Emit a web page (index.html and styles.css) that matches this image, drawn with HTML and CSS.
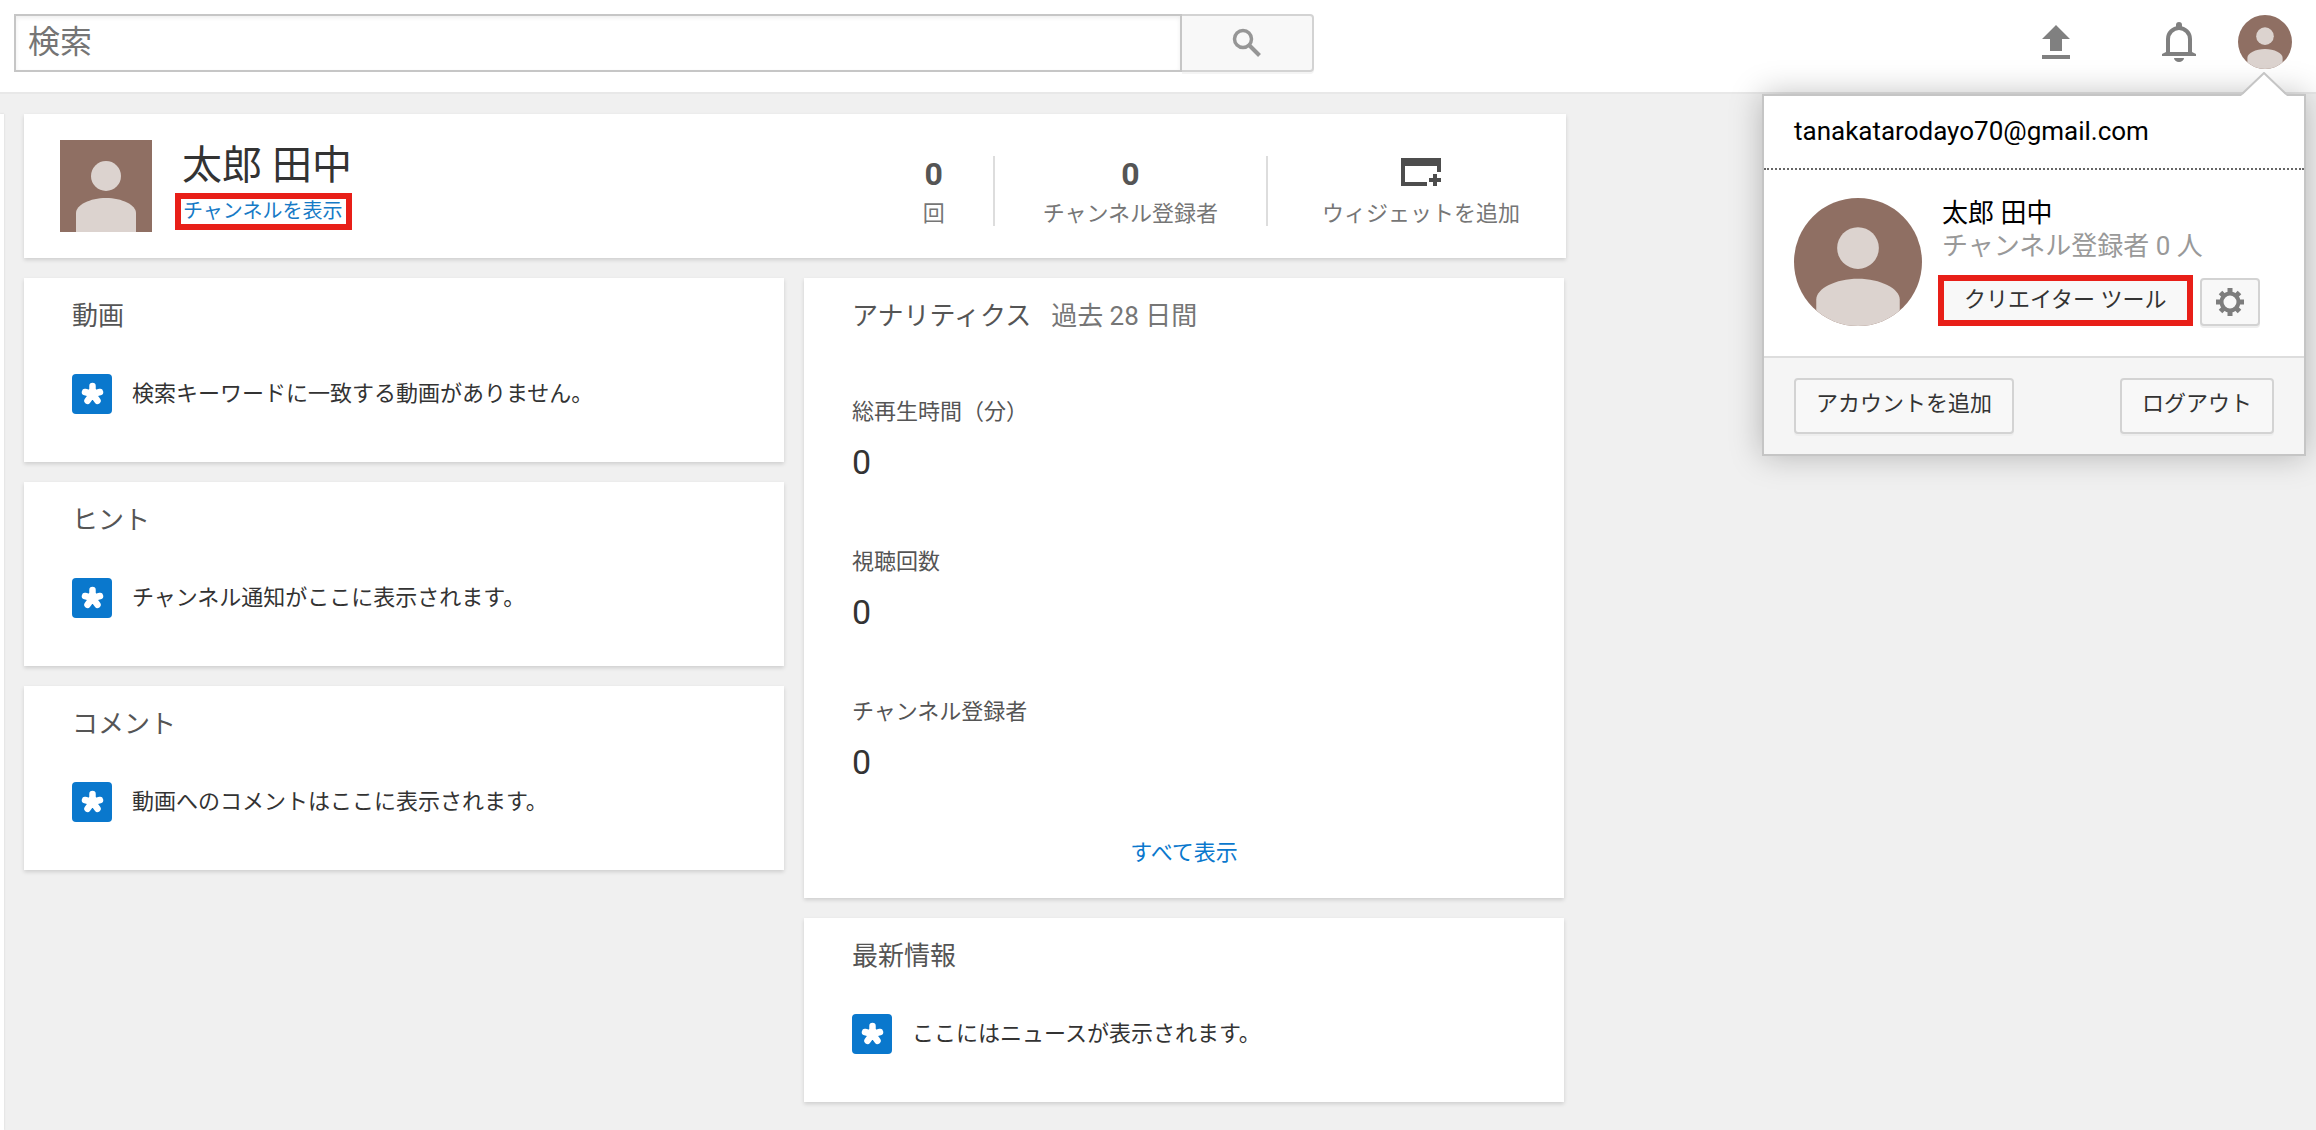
FILE: index.html
```html
<!DOCTYPE html>
<html lang="ja">
<head>
<meta charset="utf-8">
<title>ダッシュボード</title>
<link rel="stylesheet" href="styles.css">
</head>
<body>
<svg class="defs" aria-hidden="true">
  <symbol id="person" viewBox="0 0 92 92">
    <rect width="92" height="92" fill="#8f6f63"/>
    <circle cx="46" cy="36" r="15" fill="#dcd3cf"/>
    <path d="M16 92V73c0-8 14-15 30-15s30 7 30 15v19z" fill="#dcd3cf"/>
  </symbol>
  <symbol id="star" viewBox="0 0 40 40">
    <g stroke="#fff" stroke-width="6.500" stroke-linecap="round">
      <path d="M20.500 20V12M20.500 20l7.500-2M20.500 20l5 6.800M20.500 20l-5 6.800M20.500 20l-7.500-2"/>
    </g>
  </symbol>
</svg>
<header class="masthead">
  <form class="search" role="search">
    <input class="search-input" type="search" placeholder="検索" aria-label="検索">
    <button class="search-button" type="button" aria-label="検索する">
      <svg width="30" height="30" viewBox="0 0 30 30" fill="none" stroke="#969696" stroke-width="3.500"><circle cx="11" cy="11" r="8.500"/><path d="M17.500 17.500l10 10" stroke-width="4"/></svg>
    </button>
  </form>
  <nav class="masthead-icons">
    <button class="icon-button" type="button" aria-label="アップロード">
      <svg width="28" height="34" viewBox="0 0 28 34" fill="#808080"><path d="M14 0l14 14h-8v12H8V14H0zM0 30h28v4H0z"/></svg>
    </button>
    <button class="icon-button bell" type="button" aria-label="通知">
      <svg width="34" height="40" viewBox="0 0 34 40"><path d="M6 32V17a11 11 0 0 1 22 0v15" fill="none" stroke="#808080" stroke-width="4"/><path d="M14 5V3a3 3 0 0 1 6 0v2zM0 34v-2l4-2h26l4 2v2zM12 36h10a5 4 0 0 1-10 0z" fill="#808080"/></svg>
    </button>
    <button class="account" type="button" aria-label="アカウント" aria-expanded="true">
      <svg class="avatar-small"><use href="#person"/></svg>
    </button>
  </nav>
  <section class="account-menu" aria-label="アカウント メニュー">
    <svg class="menu-arrow" width="46" height="24" viewBox="0 0 46 24"><path d="M0 24L23 1l23 23z" fill="#fff"/><path d="M1 22L23 1l22 21" fill="none" stroke="#c5c5c5" stroke-width="2"/></svg>
    <div class="menu-email">tanakatarodayo70@gmail.com</div>
    <div class="menu-profile">
      <svg class="avatar-round"><use href="#person"/></svg>
      <div class="menu-detail">
        <div class="menu-name">太郎 田中</div>
        <div class="menu-subs">チャンネル登録者 0 人</div>
        <div class="menu-actions">
          <button class="btn creator" type="button">クリエイター ツール</button>
          <button class="btn gear" type="button" aria-label="設定">
            <svg width="28" height="28" viewBox="-14 -14 28 28"><circle r="8.500" fill="none" stroke="#7d7d7d" stroke-width="4"/><g stroke="#7d7d7d" stroke-width="5"><path d="M0-14v5M0 14V9M-14 0h5M14 0H9M-9.500-9.500L-6-6M9.500 9.500L6 6M-9.500 9.500L-6 6M9.500-9.500L6-6"/></g></svg>
          </button>
        </div>
      </div>
    </div>
    <div class="menu-footer">
      <button class="btn" type="button">アカウントを追加</button>
      <button class="btn" type="button">ログアウト</button>
    </div>
  </section>
</header>
<div class="page">
  <div class="rail"></div>
  <main class="dashboard">
    <section class="card profile">
      <svg class="avatar"><use href="#person"/></svg>
      <div class="profile-text">
        <h1>太郎 田中</h1>
        <a class="channel-link" href="#">チャンネルを表示</a>
      </div>
      <div class="stats">
        <div class="stat"><b>0</b><span>回</span></div>
        <div class="stat"><b>0</b><span>チャンネル登録者</span></div>
        <button class="stat widget" type="button">
          <svg width="40" height="28" viewBox="0 0 40 28" fill="#4d4d4d"><path d="M0 0h40v14h-4V8H4v16h22v4H0z"/><path d="M32 16h4v4h4v4h-4v4h-4v-4h-4v-4h4z"/></svg>
          <span>ウィジェットを追加</span>
        </button>
      </div>
    </section>
    <div class="columns">
      <div class="column">
        <section class="card">
          <h2>動画</h2>
          <p class="notice"><svg class="star"><use href="#star"/></svg>検索キーワードに一致する動画がありません。</p>
        </section>
        <section class="card">
          <h2>ヒント</h2>
          <p class="notice"><svg class="star"><use href="#star"/></svg>チャンネル通知がここに表示されます。</p>
        </section>
        <section class="card">
          <h2>コメント</h2>
          <p class="notice"><svg class="star"><use href="#star"/></svg>動画へのコメントはここに表示されます。</p>
        </section>
      </div>
      <div class="column">
        <section class="card analytics">
          <h2>アナリティクス<small>過去 28 日間</small></h2>
          <dl class="metrics">
            <div><dt>総再生時間（分）</dt><dd>0</dd></div>
            <div><dt>視聴回数</dt><dd>0</dd></div>
            <div><dt>チャンネル登録者</dt><dd>0</dd></div>
          </dl>
          <a class="view-all" href="#">すべて表示</a>
        </section>
        <section class="card">
          <h2>最新情報</h2>
          <p class="notice"><svg class="star"><use href="#star"/></svg>ここにはニュースが表示されます。</p>
        </section>
      </div>
    </div>
  </main>
</div>
</body>
</html>
```
FILE: styles.css
```css
* { box-sizing: border-box; }
body {
  margin: 0;
  min-height: 100vh;
  display: flex;
  flex-direction: column;
  background: #f0f0f0;
  color: #333;
  font: 22px/32px Roboto, "Noto Sans CJK JP", sans-serif;
}
button, input { font: inherit; color: inherit; }
button { cursor: pointer; }
h1, h2, p, dl, dd { margin: 0; font-weight: 400; }
a { text-decoration: none; }
svg { display: block; flex: none; }
.defs { position: absolute; width: 0; height: 0; }

.masthead {
  position: relative;
  display: flex;
  justify-content: space-between;
  padding: 14px 24px 20px 14px;
  background: #fff;
  border-bottom: 2px solid #e8e8e8;
}
.search { display: flex; width: 1300px; }
.search-input {
  flex: 1;
  min-width: 0;
  height: 58px;
  margin: 0;
  padding: 0 12px 2px;
  border: 2px solid #c6c6c6;
  border-radius: 0;
  background: #fff;
  box-shadow: inset 0 2px 4px #eee;
  font-size: 32px;
  appearance: none;
  outline: none;
}
.search-input::placeholder { color: #757575; opacity: 1; }
.search-button {
  display: flex;
  align-items: center;
  justify-content: center;
  width: 132px;
  padding: 0;
  border: 2px solid #d3d3d3;
  border-left: 0;
  border-radius: 0 4px 4px 0;
  background: #f8f8f8;
  box-shadow: 0 2px 0 #f4f4f4;
}
.masthead-icons { display: flex; align-items: center; height: 56px; }
.icon-button, .account { padding: 0; border: 0; background: none; }
.bell { margin: 0 42px 0 92px; }
.avatar-small { width: 54px; height: 54px; border-radius: 50%; }

.account-menu {
  position: absolute;
  top: 94px;
  right: 10px;
  z-index: 2;
  width: 544px;
  border: 2px solid #c5c5c5;
  background: #fff;
  box-shadow: 0 0 30px rgba(0, 0, 0, .25);
  color: #000;
  font-size: 26px;
}
.menu-arrow { position: absolute; top: -24px; right: 17px; }
.menu-email { padding: 19px 30px 21px; border-bottom: 2px dotted #666; }
.menu-profile { display: flex; gap: 20px; padding: 28px 30px 30px; }
.avatar-round { width: 128px; height: 128px; border-radius: 50%; }
.menu-name { line-height: 30px; }
.menu-subs { color: #999; line-height: 36px; }
.menu-actions { display: flex; align-items: flex-end; gap: 7px; margin: 11px 0 0 -4px; }
.btn {
  height: 56px;
  padding: 0 20px 4px;
  border: 2px solid #d3d3d3;
  border-radius: 4px;
  background: #f8f8f8;
  box-shadow: 0 2px 0 #eee;
  color: #333;
  font-size: 22px;
  white-space: nowrap;
}
.creator { height: 51px; padding-bottom: 2px; border: 6px solid #e81f18; border-radius: 0; box-shadow: none; }
.gear { height: 48px; padding: 0 14px; }
.menu-footer {
  display: flex;
  justify-content: space-between;
  padding: 20px 30px;
  border-top: 2px solid #ddd;
  background: #f5f5f5;
}

.page { flex: 1; display: flex; gap: 20px; padding-top: 20px; }
.rail { width: 4px; background: #fff; box-shadow: 0 0 2px #ccc; }
.dashboard { width: 1542px; }
.card { background: #fff; box-shadow: 0 2px 4px rgba(0, 0, 0, .14); }
.profile { display: flex; align-items: center; height: 144px; padding: 0 46px 0 36px; }
.avatar { width: 92px; height: 92px; }
.profile-text { flex: 1; padding: 0 0 4px 23px; }
.profile-text h1 { padding-left: 7px; font-size: 40px; line-height: 54px; }
.channel-link {
  display: inline-block;
  padding: 0 4px 0 2px;
  border: 6px solid #e81f18;
  color: #167ac6;
  font-size: 20px;
  line-height: 25px;
}
.stats { display: flex; padding-top: 10px; }
.stat {
  display: flex;
  flex-direction: column;
  align-items: center;
  gap: 6px;
  height: 70px;
  padding: 0 48px;
  border: 0;
  border-right: 2px solid #ddd;
  background: none;
  color: #767676;
}
.stat b { color: #555; font-size: 32px; line-height: 36px; }
.widget { padding: 2px 0 0 54px; gap: 12px; border-right: 0; }

.columns { display: flex; gap: 20px; padding: 20px 2px 28px 0; }
.column { flex: 1; display: flex; flex-direction: column; gap: 20px; }
.column .card { padding: 22px 48px 48px; }
.column .analytics { padding-bottom: 29px; }
h2 { color: #555; font-size: 26px; line-height: 32px; }
h2 small { margin-left: 20px; color: #767676; font-size: 26px; }
.notice { display: flex; align-items: center; gap: 20px; height: 40px; margin-top: 42px; }
.star { width: 40px; height: 40px; border-radius: 4px; background: #0a78cd; }
.metrics { display: grid; gap: 50px; padding-top: 60px; }
.metrics dt { color: #555; line-height: 40px; }
.metrics dd { font-size: 34px; line-height: 60px; }
.view-all { display: block; margin-top: 45px; color: #0a78cd; text-align: center; }
```
